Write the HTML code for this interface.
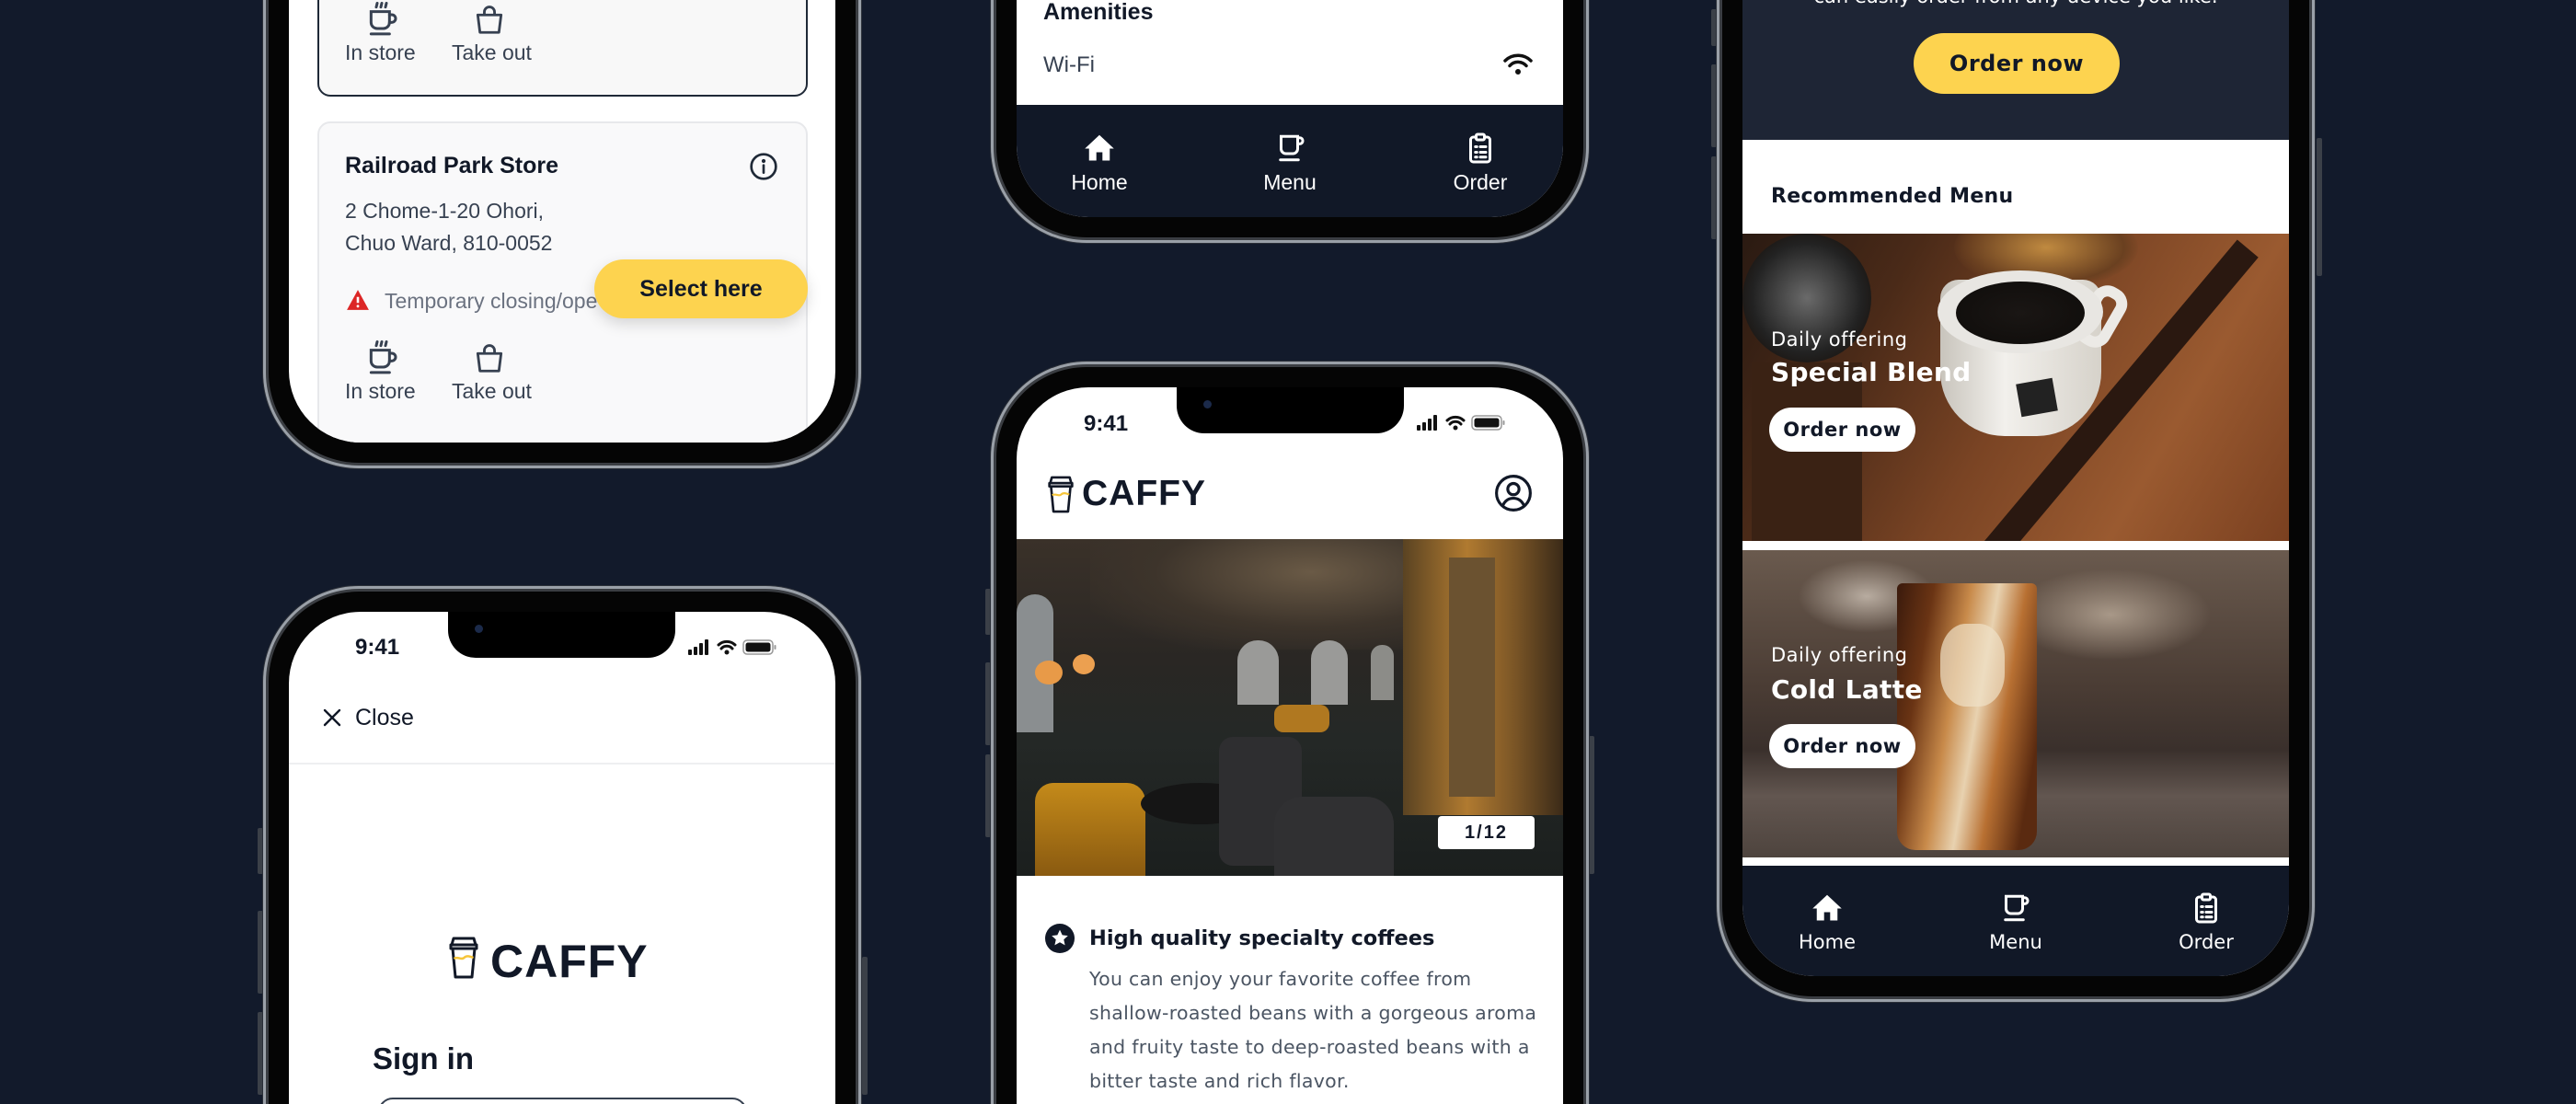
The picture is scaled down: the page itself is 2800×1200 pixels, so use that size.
<!DOCTYPE html>
<html><head><meta charset="utf-8">
<style>
*{box-sizing:border-box;margin:0;padding:0}
html,body{width:2800px;height:1200px;overflow:hidden;background:#121a2b}
body{font-family:"Liberation Sans",sans-serif;color:#111827}
#root{position:relative;width:2800px;height:1200px;overflow:hidden;background:#121a2b}
.phone{position:absolute;width:650px;height:1320px;border-radius:104px;background:#050505;box-shadow:inset 0 0 0 3px #9aa0a8,inset 0 0 0 6px #3a3d42,0 0 0 1px #2a2f38}
.screen{position:absolute;left:28px;top:28px;width:594px;height:1264px;border-radius:78px;overflow:hidden;background:#fff}
.pg{position:absolute;width:2800px;height:1400px}
.a{position:absolute}
.t{position:absolute;white-space:nowrap;line-height:1}
.notch{position:absolute;width:247px;height:50px;background:#000;border-radius:0 0 30px 30px}
.btnside{position:absolute;width:6px;background:#3b4048;border-radius:2px}
.w{font-family:"DejaVu Sans","Liberation Sans",sans-serif}
</style></head><body><div id="root">

<div class="btnside" style="left:280px;top:900px;height:50px"></div>
<div class="btnside" style="left:280px;top:990px;height:90px"></div>
<div class="btnside" style="left:280px;top:1100px;height:90px"></div>
<div class="btnside" style="left:937px;top:1040px;height:150px"></div>
<div class="btnside" style="left:1071px;top:640px;height:50px"></div>
<div class="btnside" style="left:1071px;top:720px;height:90px"></div>
<div class="btnside" style="left:1071px;top:820px;height:90px"></div>
<div class="btnside" style="left:1727px;top:800px;height:150px"></div>
<div class="btnside" style="left:1860px;top:10px;height:40px"></div>
<div class="btnside" style="left:1860px;top:70px;height:90px"></div>
<div class="btnside" style="left:1860px;top:170px;height:90px"></div>
<div class="btnside" style="left:2518px;top:150px;height:150px"></div>

<!-- PHONE 1 -->
<div class="phone" style="left:286px;top:-811px">
 <div class="screen"><div class="pg" style="left:-314px;top:783px">
  <div class="a" style="left:345px;top:-200px;width:533px;height:305px;border:2px solid #1f2937;border-radius:14px;background:#f8f8f8"></div>
  <svg class="a" style="left:395px;top:1px" width="40" height="40" viewBox="0 0 24 24" fill="none" stroke="#374151" stroke-width="1.8" stroke-linecap="round"><path d="M9 1.5l-.6 2.5M12 1.5l-.6 2.5M15 1.5l-.6 2.5"/><path d="M5 7h12v7a4 4 0 0 1-4 4H9a4 4 0 0 1-4-4z"/><path d="M17 9h1.5a2.5 2.5 0 0 1 0 5H17"/><path d="M5 21.5h12"/></svg>
  <svg class="a" style="left:513px;top:2px" width="38" height="38" viewBox="0 0 24 24" fill="none" stroke="#374151" stroke-width="1.8" stroke-linejoin="round"><path d="M4 9h16l-1.5 12h-13z"/><path d="M8.5 9V7a3.5 3.5 0 0 1 7 0v2"/></svg>
  <div class="t" style="left:375px;top:46px;font-size:23px;color:#374151">In store</div>
  <div class="t" style="left:491px;top:46px;font-size:23px;color:#374151">Take out</div>

  <div class="a" style="left:345px;top:132px;width:533px;height:420px;border:2px solid #e7e8eb;border-radius:14px;background:#f9f9fa"></div>
  <div class="t" style="left:375px;top:168px;font-size:25px;font-weight:bold">Railroad Park Store</div>
  <svg class="a" style="left:814px;top:165px" width="32" height="32" viewBox="0 0 24 24" fill="none" stroke="#1f2937" stroke-width="2" stroke-linecap="round"><circle cx="12" cy="12" r="10"/><path d="M12 11v6"/><circle cx="12" cy="7.5" r=".6" fill="#1f2937"/></svg>
  <div class="t" style="left:375px;top:218px;font-size:23px;color:#374151">2 Chome-1-20 Ohori,</div>
  <div class="t" style="left:375px;top:253px;font-size:23px;color:#374151">Chuo Ward, 810-0052</div>
  <svg class="a" style="left:376px;top:314px" width="26" height="24" viewBox="0 0 24 22"><path d="M12 1L23 21H1z" fill="#dc2626"/><path d="M12 8v6" stroke="#fff" stroke-width="2.4"/><circle cx="12" cy="17.3" r="1.3" fill="#fff"/></svg>
  <div class="t" style="left:418px;top:316px;font-size:23px;color:#6b7280">Temporary closing/ope</div>
  <div class="a" style="left:646px;top:282px;width:232px;height:64px;border-radius:32px;background:#fdd34f;box-shadow:0 6px 16px rgba(0,0,0,.15);font-size:25px;font-weight:bold;text-align:center;line-height:64px">Select here</div>
  <svg class="a" style="left:395px;top:369px" width="40" height="40" viewBox="0 0 24 24" fill="none" stroke="#374151" stroke-width="1.8" stroke-linecap="round"><path d="M9 1.5l-.6 2.5M12 1.5l-.6 2.5M15 1.5l-.6 2.5"/><path d="M5 7h12v7a4 4 0 0 1-4 4H9a4 4 0 0 1-4-4z"/><path d="M17 9h1.5a2.5 2.5 0 0 1 0 5H17"/><path d="M5 21.5h12"/></svg>
  <svg class="a" style="left:513px;top:370px" width="38" height="38" viewBox="0 0 24 24" fill="none" stroke="#374151" stroke-width="1.8" stroke-linejoin="round"><path d="M4 9h16l-1.5 12h-13z"/><path d="M8.5 9V7a3.5 3.5 0 0 1 7 0v2"/></svg>
  <div class="t" style="left:375px;top:414px;font-size:23px;color:#374151">In store</div>
  <div class="t" style="left:491px;top:414px;font-size:23px;color:#374151">Take out</div>
 </div></div>
</div>

<!-- PHONE 2 -->
<div class="phone" style="left:286px;top:637px">
 <div class="screen"><div class="pg" style="left:-314px;top:-665px">
  <div class="notch" style="left:487px;top:665px"></div>
  <div class="a" style="left:516px;top:679px;width:9px;height:9px;border-radius:50%;background:#1b2a4a"></div>
  <div class="t" style="left:386px;top:692px;font-size:24px;font-weight:bold">9:41</div>
  <svg class="a" style="left:748px;top:692px" width="120" height="24" viewBox="0 0 120 22"><rect x="0" y="13" width="4" height="6" rx="1" fill="#111"/><rect x="6" y="10" width="4" height="9" rx="1" fill="#111"/><rect x="12" y="6" width="4" height="13" rx="1" fill="#111"/><rect x="18" y="2" width="4" height="17" rx="1" fill="#111"/><path d="M33 8a13 13 0 0 1 18 0M36 12a8 8 0 0 1 12 0" stroke="#111" stroke-width="3" fill="none" stroke-linecap="round"/><circle cx="42" cy="16" r="2.5" fill="#111"/><rect x="60" y="3" width="32" height="15" rx="4" fill="none" stroke="#999" stroke-width="1.5"/><rect x="62.5" y="5.5" width="27" height="10" rx="2.5" fill="#111"/><rect x="93.5" y="8" width="2" height="5" rx="1" fill="#999"/></svg>
  <svg class="a" style="left:350px;top:769px" width="22" height="22" viewBox="0 0 22 22" stroke="#111827" stroke-width="2.4" stroke-linecap="round"><path d="M3 3l16 16M19 3L3 19"/></svg>
  <div class="t" style="left:386px;top:768px;font-size:25px">Close</div>
  <div class="a" style="left:314px;top:829px;width:594px;height:2px;background:#eeeff1"></div>
  <svg class="a" style="left:487px;top:1018px" width="34" height="46" viewBox="0 0 34 46" fill="none" stroke="#111827" stroke-width="3" stroke-linejoin="round"><path d="M6 2h22l2 7H4z"/><path d="M3 9h28v4H3z"/><path d="M5 13l3 31h18l3-31"/><path d="M6.5 24c4-3 8 2 11-1s7-1 10 0" stroke="#f6c53a" stroke-width="2.5"/></svg>
  <div class="t" style="left:533px;top:1020px;font-size:50px;font-weight:bold;letter-spacing:1px">CAFFY</div>
  <div class="t" style="left:405px;top:1134px;font-size:33px;font-weight:bold">Sign in</div>
  <div class="a" style="left:411px;top:1193px;width:401px;height:60px;border:2px solid #374151;border-radius:16px"></div>
 </div></div>
</div>

<!-- PHONE 3 -->
<div class="phone" style="left:1077px;top:-1056px">
 <div class="screen"><div class="pg" style="left:-1105px;top:1028px">
  <div class="t" style="left:1134px;top:1px;font-size:25px;font-weight:bold">Amenities</div>
  <div class="t" style="left:1134px;top:59px;font-size:24px;color:#374151">Wi-Fi</div>
  <svg class="a" style="left:1633px;top:56px" width="34" height="30" viewBox="0 0 34 30" fill="none" stroke="#111" stroke-width="3.5" stroke-linecap="round"><path d="M3 10a20 20 0 0 1 28 0M8 15.5a12 12 0 0 1 18 0"/><circle cx="17" cy="22" r="3" fill="#111" stroke="none"/></svg>
  <div class="a" style="left:1105px;top:114px;width:594px;height:200px;background:#111827"></div>
  <svg class="a" style="left:1177px;top:143px" width="36" height="36" viewBox="0 0 24 24"><path d="M12 2.5L1.5 12.3h3V21h5.3v-6h4.4v6h5.3v-8.7h3z" fill="#fff"/></svg>
  <svg class="a" style="left:1385px;top:143px" width="36" height="36" viewBox="0 0 24 24" fill="none" stroke="#fff" stroke-width="2" stroke-linecap="round"><path d="M5 3.5h12v9a3.5 3.5 0 0 1-3.5 3.5h-5A3.5 3.5 0 0 1 5 12.5z"/><path d="M17 4.5h1.5a2.2 2.2 0 0 1 0 4.4H17"/><path d="M4.5 20.5h13"/></svg>
  <svg class="a" style="left:1591px;top:143px" width="36" height="36" viewBox="0 0 24 24" fill="none" stroke="#fff" stroke-width="2" stroke-linecap="round"><rect x="5" y="4" width="14" height="18" rx="2"/><rect x="9" y="2" width="6" height="4" rx="1" fill="#111827"/><path d="M8.5 11h1M12 11h4M8.5 15h1M12 15h4M8.5 18.5h1M12 18.5h4"/></svg>
  <div class="t" style="left:1145px;top:187px;width:100px;text-align:center;font-size:23px;color:#fff">Home</div>
  <div class="t" style="left:1352px;top:187px;width:100px;text-align:center;font-size:23px;color:#fff">Menu</div>
  <div class="t" style="left:1559px;top:187px;width:100px;text-align:center;font-size:23px;color:#fff">Order</div>
 </div></div>
</div>

<!-- PHONE 4 -->
<div class="phone" style="left:1077px;top:393px">
 <div class="screen"><div class="pg" style="left:-1105px;top:-421px">
  <div class="notch" style="left:1279px;top:421px"></div>
  <div class="a" style="left:1308px;top:435px;width:9px;height:9px;border-radius:50%;background:#1b2a4a"></div>
  <div class="t" style="left:1178px;top:449px;font-size:24px;font-weight:bold">9:41</div>
  <svg class="a" style="left:1540px;top:448px" width="120" height="24" viewBox="0 0 120 22"><rect x="0" y="13" width="4" height="6" rx="1" fill="#111"/><rect x="6" y="10" width="4" height="9" rx="1" fill="#111"/><rect x="12" y="6" width="4" height="13" rx="1" fill="#111"/><rect x="18" y="2" width="4" height="17" rx="1" fill="#111"/><path d="M33 8a13 13 0 0 1 18 0M36 12a8 8 0 0 1 12 0" stroke="#111" stroke-width="3" fill="none" stroke-linecap="round"/><circle cx="42" cy="16" r="2.5" fill="#111"/><rect x="60" y="3" width="32" height="15" rx="4" fill="none" stroke="#999" stroke-width="1.5"/><rect x="62.5" y="5.5" width="27" height="10" rx="2.5" fill="#111"/><rect x="93.5" y="8" width="2" height="5" rx="1" fill="#999"/></svg>
  <svg class="a" style="left:1138px;top:517px" width="30" height="41" viewBox="0 0 34 46" fill="none" stroke="#111827" stroke-width="3" stroke-linejoin="round"><path d="M6 2h22l2 7H4z"/><path d="M3 9h28v4H3z"/><path d="M5 13l3 31h18l3-31"/><path d="M6.5 24c4-3 8 2 11-1s7-1 10 0" stroke="#f6c53a" stroke-width="2.5"/></svg>
  <div class="t" style="left:1176px;top:517px;font-size:39px;font-weight:bold;letter-spacing:1px">CAFFY</div>
  <svg class="a" style="left:1624px;top:515px" width="42" height="42" viewBox="0 0 24 24" fill="none" stroke="#111827" stroke-width="1.8"><circle cx="12" cy="12" r="10.5"/><circle cx="12" cy="9.5" r="3.5"/><path d="M5.5 19.5c1.5-3 4-4.3 6.5-4.3s5 1.3 6.5 4.3"/></svg>
  <div class="a" style="left:1105px;top:586px;width:594px;height:366px;overflow:hidden;background:linear-gradient(180deg,#3a3129 0%,#2a2724 35%,#242826 60%,#1b1f1e 100%)">
   <div class="a" style="left:80px;top:0;width:480px;height:120px;background:radial-gradient(ellipse at 50% 30%,#6a5a46 0%,#3d342b 50%,transparent 80%)"></div>
   <div class="a" style="left:420px;top:0;width:174px;height:300px;background:linear-gradient(90deg,#5a4322,#b07a30 40%,#7a5526 70%,#3a2a18)"></div>
   <div class="a" style="left:470px;top:20px;width:50px;height:260px;background:#6b5230"></div>
   <div class="a" style="left:0;top:60px;width:40px;height:150px;border-radius:20px 20px 0 0;background:#8a8e90"></div>
   <div class="a" style="left:240px;top:110px;width:45px;height:70px;border-radius:22px 22px 0 0;background:#9a9a98"></div>
   <div class="a" style="left:320px;top:110px;width:40px;height:70px;border-radius:20px 20px 0 0;background:#9a9a98"></div>
   <div class="a" style="left:385px;top:115px;width:25px;height:60px;border-radius:12px 12px 0 0;background:#8c8c88"></div>
   <div class="a" style="left:20px;top:132px;width:30px;height:26px;border-radius:50%;background:#e89a48"></div>
   <div class="a" style="left:61px;top:125px;width:24px;height:22px;border-radius:50%;background:#eca050"></div>
   <div class="a" style="left:280px;top:180px;width:60px;height:30px;border-radius:10px;background:#b07820"></div>
   <div class="a" style="left:20px;top:265px;width:120px;height:101px;border-radius:20px 20px 0 0;background:linear-gradient(180deg,#c48a1a,#8a5a10)"></div>
   <div class="a" style="left:135px;top:265px;width:130px;height:45px;border-radius:50%;background:#151515"></div>
   <div class="a" style="left:220px;top:215px;width:90px;height:140px;border-radius:15px;background:#2e2e30"></div>
   <div class="a" style="left:280px;top:280px;width:130px;height:86px;border-radius:30px 30px 0 0;background:#303032"></div>
  </div>
  <div class="a" style="left:1563px;top:887px;width:105px;height:36px;background:#fff;border-radius:4px;font-size:20px;font-weight:bold;text-align:center;line-height:36px;letter-spacing:2px">1/12</div>
  <svg class="a" style="left:1136px;top:1004px" width="32" height="32" viewBox="0 0 24 24"><circle cx="12" cy="12" r="12" fill="#111827"/><path d="M12 5l2 4.3 4.6.5-3.4 3.1 1 4.6L12 15.2 7.8 17.5l1-4.6-3.4-3.1 4.6-.5z" fill="#fff"/></svg>
  <div class="t w" style="left:1184px;top:1009px;font-size:22.5px;font-weight:bold">High quality specialty coffees</div>
  <div class="a w" style="left:1184px;top:1046px;width:520px;font-size:20.5px;line-height:37px;color:#4b5563;letter-spacing:.3px;white-space:nowrap">You can enjoy your favorite coffee from<br>shallow-roasted beans with a gorgeous aroma<br>and fruity taste to deep-roasted beans with a<br>bitter taste and rich flavor.</div>
 </div></div>
</div>

<!-- PHONE 5 -->
<div class="phone" style="left:1866px;top:-231px">
 <div class="screen"><div class="pg" style="left:-1894px;top:203px">
  <div class="a" style="left:1894px;top:-10px;width:594px;height:162px;background:#1e2535"></div>
  <div class="t w" style="left:1894px;top:-14px;width:594px;text-align:center;font-size:21px;color:#fff">can easily order from any device you like.</div>
  <div class="a w" style="left:2080px;top:36px;width:224px;height:66px;border-radius:33px;background:#fdd34f;font-size:24px;font-weight:bold;text-align:center;line-height:66px;letter-spacing:.5px">Order now</div>
  <div class="t w" style="left:1925px;top:203px;font-size:22px;font-weight:bold;letter-spacing:.3px">Recommended Menu</div>
  <div class="a" style="left:1894px;top:254px;width:594px;height:334px;overflow:hidden;background:linear-gradient(120deg,#2a1a12 0%,#4a2a18 25%,#7a4424 50%,#9a5a30 75%,#7a4020 100%)">
   <div class="a" style="left:380px;top:-40px;width:30px;height:480px;background:#2a1810;transform:rotate(40deg)"></div>
   <div class="a" style="left:0;top:0;width:140px;height:140px;border-radius:50%;background:radial-gradient(circle,#6a6a6a,#222 60%,#1a1410 80%)"></div>
   <div class="a" style="left:10px;top:140px;width:120px;height:194px;background:#3a2214"></div>
   <div class="a" style="left:230px;top:-30px;width:200px;height:90px;border-radius:50%;background:radial-gradient(ellipse,#c08a40,#6a4020 60%,transparent 72%)"></div>
   <div class="a" style="left:215px;top:50px;width:175px;height:170px;border-radius:20px 20px 70px 70px;background:linear-gradient(90deg,#c8c4bc,#f2f0ec 40%,#d6d2ca)"></div>
   <div class="a" style="left:370px;top:55px;width:40px;height:70px;border-radius:18px;border:12px solid #eceae6;transform:rotate(30deg)"></div>
   <div class="a" style="left:212px;top:40px;width:180px;height:90px;border-radius:50%;background:#e8e6e2"></div>
   <div class="a" style="left:232px;top:52px;width:140px;height:68px;border-radius:50%;background:radial-gradient(ellipse,#1a1614,#0e0c0a)"></div>
   <div class="a" style="left:300px;top:160px;width:40px;height:36px;background:#222;transform:rotate(-10deg)"></div>
  </div>
  <div class="t w" style="left:1925px;top:359px;font-size:21px;color:#fff;letter-spacing:.5px">Daily offering</div>
  <div class="t w" style="left:1925px;top:391px;font-size:28px;font-weight:bold;color:#fff;letter-spacing:.3px">Special Blend</div>
  <div class="a w" style="left:1923px;top:443px;width:159px;height:48px;border-radius:24px;background:#fff;font-size:21px;font-weight:bold;text-align:center;line-height:48px;letter-spacing:.5px">Order now</div>
  <div class="a" style="left:1894px;top:598px;width:594px;height:334px;overflow:hidden;background:linear-gradient(180deg,#6a5a4e 0%,#4a3c34 45%,#3a302c 65%,#625650 80%,#4e443e 100%)">
   <div class="a" style="left:60px;top:10px;width:150px;height:80px;border-radius:50%;background:radial-gradient(ellipse,#b8aca0,transparent 70%)"></div>
   <div class="a" style="left:290px;top:20px;width:220px;height:100px;border-radius:50%;background:radial-gradient(ellipse,#a89888,transparent 70%)"></div>
   <div class="a" style="left:168px;top:36px;width:152px;height:290px;border-radius:6px 6px 20px 20px;background:linear-gradient(100deg,#3a1a0c 0%,#6a3414 20%,#c88a4a 40%,#e8d2b0 55%,#b87032 70%,#5a2a10 90%)"></div>
   <div class="a" style="left:215px;top:80px;width:70px;height:90px;border-radius:40%;background:rgba(240,225,200,.7)"></div>
  </div>
  <div class="t w" style="left:1925px;top:702px;font-size:21px;color:#fff;letter-spacing:.5px">Daily offering</div>
  <div class="t w" style="left:1925px;top:736px;font-size:28px;font-weight:bold;color:#fff;letter-spacing:.3px">Cold Latte</div>
  <div class="a w" style="left:1923px;top:787px;width:159px;height:48px;border-radius:24px;background:#fff;font-size:21px;font-weight:bold;text-align:center;line-height:48px;letter-spacing:.5px">Order now</div>
  <div class="a" style="left:1894px;top:941px;width:594px;height:160px;background:#111827"></div>
  <svg class="a" style="left:1968px;top:969px" width="36" height="36" viewBox="0 0 24 24"><path d="M12 2.5L1.5 12.3h3V21h5.3v-6h4.4v6h5.3v-8.7h3z" fill="#fff"/></svg>
  <svg class="a" style="left:2173px;top:969px" width="36" height="36" viewBox="0 0 24 24" fill="none" stroke="#fff" stroke-width="2" stroke-linecap="round"><path d="M5 3.5h12v9a3.5 3.5 0 0 1-3.5 3.5h-5A3.5 3.5 0 0 1 5 12.5z"/><path d="M17 4.5h1.5a2.2 2.2 0 0 1 0 4.4H17"/><path d="M4.5 20.5h13"/></svg>
  <svg class="a" style="left:2380px;top:969px" width="36" height="36" viewBox="0 0 24 24" fill="none" stroke="#fff" stroke-width="2" stroke-linecap="round"><rect x="5" y="4" width="14" height="18" rx="2"/><rect x="9" y="2" width="6" height="4" rx="1" fill="#111827"/><path d="M8.5 11h1M12 11h4M8.5 15h1M12 15h4M8.5 18.5h1M12 18.5h4"/></svg>
  <div class="t w" style="left:1936px;top:1014px;width:100px;text-align:center;font-size:21px;color:#fff">Home</div>
  <div class="t w" style="left:2141px;top:1014px;width:100px;text-align:center;font-size:21px;color:#fff">Menu</div>
  <div class="t w" style="left:2348px;top:1014px;width:100px;text-align:center;font-size:21px;color:#fff">Order</div>
 </div></div>
</div>

</div></body></html>
